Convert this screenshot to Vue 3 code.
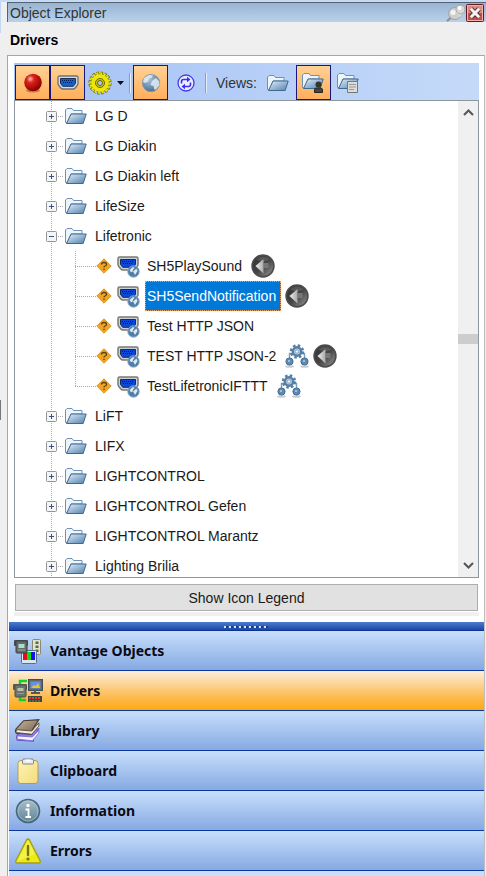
<script setup>
import { ref } from 'vue'

const groups = [
  { name: 'LG D' },
  { name: 'LG Diakin' },
  { name: 'LG Diakin left' },
  { name: 'LifeSize' },
  {
    name: 'Lifetronic',
    children: [
      { name: 'SH5PlaySound', marks: ['back'] },
      { name: 'SH5SendNotification', marks: ['back'] },
      { name: 'Test HTTP JSON', marks: [] },
      { name: 'TEST HTTP JSON-2', marks: ['task', 'back'] },
      { name: 'TestLifetronicIFTTT', marks: ['task'] }
    ]
  },
  { name: 'LiFT' },
  { name: 'LIFX' },
  { name: 'LIGHTCONTROL' },
  { name: 'LIGHTCONTROL Gefen' },
  { name: 'LIGHTCONTROL Marantz' },
  { name: 'Lighting Brilia' }
]
const selected = ref('SH5SendNotification')

const sections = [
  { name: 'Vantage Objects', icon: 'objects' },
  { name: 'Drivers', icon: 'drivers' },
  { name: 'Library', icon: 'library' },
  { name: 'Clipboard', icon: 'clipboard' },
  { name: 'Information', icon: 'info' },
  { name: 'Errors', icon: 'errors' }
]
const section = ref('Drivers')
</script>

<template>
  <svg class="defs" aria-hidden="true">
    <defs>
      <linearGradient id="gFolder" x1="0" y1="0" x2="1" y2="1">
        <stop offset="0" stop-color="#e4eff8" /><stop offset="1" stop-color="#4f80ae" />
      </linearGradient>
      <radialGradient id="gRed" cx=".35" cy=".3" r=".7">
        <stop offset="0" stop-color="#ffc0b8" /><stop offset=".3" stop-color="#dc2418" /><stop offset="1" stop-color="#8c0000" />
      </radialGradient>
      <radialGradient id="gGlobe" cx=".4" cy=".3" r=".7">
        <stop offset="0" stop-color="#a8c4da" /><stop offset="1" stop-color="#4a7296" />
      </radialGradient>
      <linearGradient id="gBack" x1="0" y1="0" x2="1" y2="1">
        <stop offset="0" stop-color="#303030" /><stop offset=".5" stop-color="#444" /><stop offset="1" stop-color="#9a9a9a" />
      </linearGradient>
      <linearGradient id="gArrow" x1="0" y1="0" x2="1" y2="0">
        <stop offset="0" stop-color="#f0f0f0" /><stop offset="1" stop-color="#a8a8a8" />
      </linearGradient>
      <linearGradient id="gInfo" x1="0" y1="0" x2="0" y2="1">
        <stop offset="0" stop-color="#a9bfcd" /><stop offset="1" stop-color="#5d8296" />
      </linearGradient>
      <linearGradient id="gClip" x1="0" y1="0" x2="1" y2="1">
        <stop offset="0" stop-color="#fff3b4" /><stop offset="1" stop-color="#f1dc7c" />
      </linearGradient>
      <linearGradient id="gBook" x1="0" y1="0" x2="1" y2="1">
        <stop offset="0" stop-color="#c9bba4" /><stop offset="1" stop-color="#6d5a44" />
      </linearGradient>
    </defs>
    <symbol id="folder" viewBox="0 0 22 18">
      <path d="M.5 15.500V3L2 1.500h5L8.500 3.500H17V7H6L3 16z" fill="#edf4fa" stroke="#6d92b4" />
      <path d="M1.500 16.500L6 7h15.200l-3 9.500z" fill="url(#gFolder)" stroke="#41688f" />
    </symbol>
    <symbol id="folderUser" viewBox="0 0 22 21">
      <use href="#folder" width="22" height="18" />
      <circle cx="16.500" cy="12.500" r="3" fill="#33332f" />
      <path d="M12.500 20.500v-2.500q0-2 2-2h4q2 0 2 2v2.500z" fill="#454540" stroke="#242420" />
    </symbol>
    <symbol id="folderDoc" viewBox="0 0 22 21">
      <use href="#folder" width="22" height="18" />
      <path d="M10.500 9.500h10v11h-10z" fill="#dcdcd8" stroke="#777" />
      <path d="M12 12.500h7M12 15h7M12 17.500h5" stroke="#999" />
    </symbol>
    <symbol id="record" viewBox="0 0 20 20">
      <ellipse cx="10" cy="17.500" rx="7" ry="2" fill="#a85c30" opacity=".6" />
      <circle cx="10" cy="9.500" r="8.800" fill="url(#gRed)" />
    </symbol>
    <symbol id="port" viewBox="0 0 22 15">
      <path d="M2.500 1h17q1.500 0 1.500 1.500v6q0 1-.8 2l-2 2.500q-.8 1-2.200 1H6q-1.400 0-2.200-1l-2-2.500q-.8-1-.8-2v-6Q1 1 2.500 1z" fill="#d8dbde" stroke="#6d7175" stroke-width="1.300" />
      <path d="M3.500 3.500h15v4.800l-2.200 3H5.700l-2.200-3z" fill="#1560c8" stroke="#183258" />
      <path d="M5 5.500h12M6 7.500h10" stroke="#0a1f58" stroke-dasharray="1 1" />
    </symbol>
    <symbol id="globe" viewBox="0 0 20 20">
      <circle cx="10" cy="10" r="8.700" fill="url(#gGlobe)" stroke="#7f97ac" stroke-width=".6" />
      <path d="M3 5l5-3 4 .5-1 2-3 1-1 3-3 1.500-2-1zM11 8l4-3 3 3 .5 4-3 4-2 1-1-4-3-1z" fill="#e4edf3" opacity=".85" />
    </symbol>
    <symbol id="gear" viewBox="0 0 24 24">
      <circle cx="12" cy="12" r="9.600" fill="none" stroke="#77750a" stroke-width="4" stroke-dasharray="2.500 1.270" />
      <circle cx="12" cy="12" r="9.200" fill="#eee60a" stroke="#85820a" stroke-width=".8" />
      <circle cx="12" cy="12" r="9.500" fill="none" stroke="#f0e80c" stroke-width="2.600" stroke-dasharray="1.700 2.030" />
      <circle cx="12" cy="12" r="4.500" fill="#d4cc18" stroke="#666408" />
      <circle cx="12" cy="12" r="2.500" fill="#b0c8f7" stroke="#666408" />
    </symbol>
    <symbol id="refresh" viewBox="0 0 18 18">
      <circle cx="9" cy="9" r="8" fill="#e9efff" stroke="#4538f0" stroke-width="1.300" />
      <path d="M4.500 9.500V7.500q0-2 2-2H11M13.500 8.500v2q0 2-2 2H7" fill="none" stroke="#3c2df0" stroke-width="1.600" />
      <path d="M10 2.800l3.500 2.700L10 8.200zM8 9.800l-3.500 2.700L8 15.200z" fill="#3c2df0" />
    </symbol>
    <symbol id="caution" viewBox="0 0 16 16">
      <path d="M8 .8L15.200 8 8 15.200.8 8z" fill="#f0a424" stroke="#dc9422" stroke-linejoin="round" />
      <path d="M5.500 6.500q0-2 2.500-2t2.500 1.800q0 1.200-1.500 1.700Q8 8.300 8 9.500" fill="none" stroke="#5c4212" stroke-width="1.300" />
      <path d="M7.300 10.700h1.400v1.400H7.300z" fill="#5c4212" />
    </symbol>
    <symbol id="netPort" viewBox="0 0 23 22">
      <path d="M2.500 1h17q1.500 0 1.500 1.500v6q0 1-.8 2l-2 2.500q-.8 1-2.200 1H6q-1.400 0-2.200-1l-2-2.500q-.8-1-.8-2v-6Q1 1 2.500 1z" fill="#cfd0d1" stroke="#77797b" stroke-width="1.500" />
      <path d="M3.500 3.500h15v4.800l-2.200 3H5.700l-2.200-3z" fill="#0a48dc" stroke="#1c2c44" />
      <path d="M5 5.500h12M6 7.500h10" stroke="#04145c" stroke-dasharray="1 1" />
      <circle cx="16.500" cy="15.500" r="5.700" fill="#4e7da8" stroke="#8aa9c4" />
      <path d="M12.500 14l3.500-3 1.500.7-1.500 2-.5 2-1.500.5zM16 15.500l3.500-3 1 2.500-2.500 4-1-2z" fill="#dfe9f1" />
    </symbol>
    <symbol id="back" viewBox="0 0 24 24">
      <circle cx="12" cy="12" r="10.900" fill="url(#gBack)" stroke="#4c4c4c" stroke-width="1.600" />
      <path d="M5 5.500Q12-.5 19 5.500L12 8z" fill="#777" opacity=".45" />
      <path d="M12.500 9h5v5h-5z" fill="#777" />
      <path d="M12.500 5v14.500L4.500 12z" fill="url(#gArrow)" />
    </symbol>
    <symbol id="task" viewBox="0 0 24 24">
      <ellipse cx="4.500" cy="22.500" rx="4.500" ry="1.300" fill="#c9cdd1" /><ellipse cx="19.500" cy="22.500" rx="4.500" ry="1.300" fill="#c9cdd1" />
      <path d="M8 9.500H4.500V15M16 9.500h3.500V15" fill="none" stroke="#7d9cb7" stroke-width="1.400" />
      <circle cx="12" cy="7.500" r="6" fill="none" stroke="#557fa5" stroke-width="2.400" stroke-dasharray="2.500 2.212" />
      <circle cx="12" cy="7.500" r="4.200" fill="#b4cbdd" stroke="#557fa5" stroke-width="2.400" />
      <circle cx="12" cy="7.500" r="1.700" fill="#eef4f9" stroke="#7d9cb7" stroke-width=".8" />
      <circle cx="4.500" cy="17.500" r="3.600" fill="#5f8ab0" stroke="#456f96" />
      <circle cx="19.500" cy="17.500" r="3.600" fill="#5f8ab0" stroke="#456f96" />
      <path d="M3 17h2M18 17h2" stroke="#b9cfe0" stroke-width="1.500" />
    </symbol>
    <symbol id="pin" viewBox="0 0 20 18">
      <path d="M1 17l6-5" stroke="#8c8c8c" stroke-width="2" />
      <ellipse cx="9" cy="9.500" rx="6.500" ry="6" fill="#cfcfcd" stroke="#a0a3a6" />
      <path d="M8 6l5-4 5 6-4 5z" fill="#dededc" />
      <circle cx="14.500" cy="5.500" r="4.500" fill="#d8d8d6" stroke="#a4a6a8" />
      <circle cx="13.500" cy="4" r="2" fill="#fff" /><circle cx="7" cy="8.500" r="2.500" fill="#f4f4f2" />
    </symbol>
    <symbol id="close" viewBox="0 0 18 18">
      <rect x=".5" y=".5" width="17" height="17" rx="1" fill="#dc8a84" stroke="#5c1c24" />
      <rect x="1.500" y="1.500" width="15" height="15" fill="none" stroke="#eeb0aa" />
      <path d="M2 9h14v7H2z" fill="#c0504c" />
      <path d="M5 5l8 8M13 5l-8 8" stroke="#5b3038" stroke-width="5" />
      <path d="M4.800 4.800l8.400 8.400M13.200 4.800l-8.400 8.400" stroke="#f6f2f2" stroke-width="3" />
    </symbol>
    <symbol id="objects" viewBox="0 0 30 26">
      <rect x="19.500" y="1.500" width="8" height="15" rx="1" fill="#e5e2cf" stroke="#8b8877" />
      <path d="M22.500 3.500h3v2.500h-3zM22.500 7.500h3v2.500h-3zM22.500 11.500h3v2.500h-3z" fill="#45763f" />
      <rect x="8.500" y="12.500" width="15" height="13" rx="1" fill="#dce6f0" stroke="#55708e" />
      <path d="M10 14h4v8h-4z" fill="#e80c18" /><path d="M14 14h4v8h-4z" fill="#10d81c" /><path d="M18 14h4v8h-4z" fill="#1414e8" />
      <rect x="1" y="2" width="14" height="6" rx="1" fill="#484d4e" /><rect x="3" y="3" width="11" height="12" rx="1" fill="#656c6c" stroke="#3b4040" />
      <rect x="5.500" y="6" width="6" height="4" fill="#a9dfc9" /><path d="M5 12h7" stroke="#a0a8a8" />
    </symbol>
    <symbol id="drivers" viewBox="0 0 30 26">
      <path d="M7 6V3h7M7 19v3h6" fill="none" stroke="#10d22c" stroke-width="2.500" />
      <rect x="15.500" y="1.500" width="14" height="11" fill="#606868" stroke="#454d4e" />
      <rect x="17.500" y="3.500" width="10" height="7" fill="#668fe8" /><path d="M18 10l3-3 2 1 2-3 2 5z" fill="#f0c51c" />
      <path d="M22 12v3M18 15h9" stroke="#52595b" stroke-width="2" />
      <rect x="0" y="6" width="14" height="6" rx="1" fill="#555a59" /><rect x="2" y="7" width="11" height="12" rx="1" fill="#6d7371" stroke="#4b504e" />
      <rect x="4.500" y="10" width="6" height="3" fill="#bac3a2" /><path d="M4 15.500h7" stroke="#929b93" />
      <rect x="15" y="18" width="14" height="6" fill="#3c4744" /><path d="M16 20h12" stroke="#f23434" stroke-width="2" stroke-dasharray="2 1" />
      <path d="M16 23h12" stroke="#39a164" stroke-dasharray="2 1" />
    </symbol>
    <symbol id="library" viewBox="0 0 26 24">
      <path d="M3 15.500l6-4 14-1.500-5 8v3.500L3 20.500q-1.500-2.500 0-5z" fill="#8d7ce2" stroke="#6858d0" />
      <path d="M3 16.500l14 1 6-6v2.500L17 21 3 19.500z" fill="#f2f2fc" stroke="#7969d8" stroke-width=".8" />
      <path d="M2 10L9 2.500l14-1-6 9.500-.5 4L2 14q-1.500-2 0-4z" fill="url(#gBook)" stroke="#49392a" />
      <path d="M2.500 10.800L16.500 12 23 4.500v3L16.500 15 2.500 13.500q-1-1.300 0-2.700z" fill="#f1eee6" stroke="#514131" stroke-width=".8" />
    </symbol>
    <symbol id="clipboard" viewBox="0 0 22 26">
      <rect x="1" y="2.500" width="20" height="23" rx="3" fill="url(#gClip)" stroke="#b09d50" />
      <path d="M5.500 5V2.500q0-1.500 1.500-1.500h8q1.500 0 1.500 1.500V5q0 1-1 1h-9q-1 0-1-1z" fill="#eaeaea" stroke="#828587" />
      <path d="M8.500 1.500h5v2h-5z" fill="#fff" />
    </symbol>
    <symbol id="info" viewBox="0 0 26 26">
      <circle cx="13" cy="13" r="11.500" fill="url(#gInfo)" stroke="#46697c" stroke-width="1.600" />
      <circle cx="13" cy="13" r="10" fill="none" stroke="#bed0da" stroke-width=".8" opacity=".6" />
      <circle cx="13" cy="7.500" r="1.700" fill="#fff" />
      <path d="M10.500 11.500h3V19M10.500 19h5.500" fill="none" stroke="#fff" stroke-width="1.800" />
    </symbol>
    <symbol id="errors" viewBox="0 0 26 26">
      <path d="M11.500 2q1.500-2 3 0l10.500 20.500q1 2.500-1.500 2.500h-21Q0 25 1 22.500z" fill="#eeea18" stroke="#a29e16" stroke-width="1.400" />
      <path d="M13 2.500l7 13.500L2.500 23z" fill="#f9f77b" opacity=".5" />
      <path d="M13 8v9" stroke="#77740c" stroke-width="2.400" stroke-linecap="round" /><circle cx="13" cy="21" r="1.600" fill="#77740c" />
    </symbol>
  </svg>

  <main class="explorer">
    <header class="titlebar">
      <h1 class="title">Object Explorer</h1>
      <button class="plain" type="button" aria-label="Auto hide"><svg width="20" height="18"><use href="#pin" /></svg></button>
      <button class="plain" type="button" aria-label="Close"><svg width="18" height="18"><use href="#close" /></svg></button>
    </header>
    <h2 class="heading">Drivers</h2>

    <section class="panel">
      <div class="content">
        <div class="toolbar" role="toolbar" aria-label="Driver filters">
          <button class="tool on" type="button" aria-label="Record" aria-pressed="true"><svg width="20" height="20"><use href="#record" /></svg></button>
          <button class="tool on" type="button" aria-label="Ports" aria-pressed="true"><svg width="22" height="15"><use href="#port" /></svg></button>
          <button class="tool menu" type="button" aria-label="Settings">
            <svg width="24" height="24"><use href="#gear" /></svg>
            <svg width="7" height="4" viewBox="0 0 7 4"><path d="M0 0h7L3.500 4z" fill="#111" /></svg>
          </button>
          <span class="sep"></span>
          <button class="tool on" type="button" aria-label="Network" aria-pressed="true"><svg width="20" height="20"><use href="#globe" /></svg></button>
          <button class="tool" type="button" aria-label="Refresh"><svg width="18" height="18"><use href="#refresh" /></svg></button>
          <span class="sep"></span>
          <span class="views">Views:</span>
          <button class="tool" type="button" aria-label="Folder view"><svg width="22" height="18"><use href="#folder" /></svg></button>
          <button class="tool on" type="button" aria-label="User view" aria-pressed="true"><svg width="22" height="21"><use href="#folderUser" /></svg></button>
          <button class="tool" type="button" aria-label="Document view"><svg width="22" height="21"><use href="#folderDoc" /></svg></button>
        </div>

        <div class="treebox">
          <ul class="tree" role="tree">
            <li v-for="g in groups" :key="g.name" class="group" role="treeitem">
              <div class="row">
                <button class="expander" type="button" :aria-label="(g.children ? 'Collapse ' : 'Expand ') + g.name">
                  <svg width="11" height="11" viewBox="0 0 11 11">
                    <rect x=".5" y=".5" width="10" height="10" rx="1" fill="#f5f5f5" stroke="#949494" />
                    <path :d="g.children ? 'M3 5.500h5' : 'M3 5.500h5M5.500 3v5'" stroke="#3b4f91" />
                  </svg>
                </button>
                <span class="stub"></span>
                <svg width="22" height="18"><use href="#folder" /></svg>
                <span class="name">{{ g.name }}</span>
              </div>
              <ul v-if="g.children" class="children" role="group">
                <li v-for="c in g.children" :key="c.name" class="row child" role="treeitem">
                  <span class="branch"></span>
                  <svg width="16" height="16"><use href="#caution" /></svg>
                  <svg class="driver" width="23" height="22"><use href="#netPort" /></svg>
                  <button class="label" :class="{ selected: selected === c.name }" type="button" @click="selected = c.name">{{ c.name }}</button>
                  <svg v-for="m in c.marks" :key="m" class="mark" width="24" height="24"><use :href="'#' + m" /></svg>
                </li>
              </ul>
            </li>
          </ul>
          <div class="scrollbar">
            <svg width="11" height="7" viewBox="0 0 11 7"><path d="M1 6l4.500-4.500L10 6" fill="none" stroke="#555" stroke-width="2" /></svg>
            <span class="thumb"></span>
            <svg width="11" height="7" viewBox="0 0 11 7"><path d="M1 1l4.500 4.500L10 1" fill="none" stroke="#555" stroke-width="2" /></svg>
          </div>
        </div>

        <button class="legend" type="button">Show Icon Legend</button>
        <div class="edge"></div>
      </div>

      <div class="splitter"></div>
      <nav class="sections" aria-label="Sections">
        <button v-for="s in sections" :key="s.name" class="section" :class="{ current: section === s.name }" type="button" @click="section = s.name">
          <svg width="30" height="26"><use :href="'#' + s.icon" /></svg>
          <span>{{ s.name }}</span>
        </button>
        <div class="rest"></div>
      </nav>
    </section>
  </main>
</template>

<style>
body { background: #efefef; }
#app { height: 100vh; }
</style>

<style scoped>
* { box-sizing: border-box; }
.defs { position: absolute; width: 0; height: 0; }
svg { display: block; flex: none; }
button { font: inherit; color: inherit; padding: 0; border: 0; background: none; }
ul { list-style: none; margin: 0; padding: 0; }

.explorer {
  height: 100%;
  display: flex;
  flex-direction: column;
  padding: 2px 0 0 7px;
  overflow: hidden;
  background: linear-gradient(#c3dbf8, #c3dbf8) 0 0 / 100% 2px no-repeat, linear-gradient(#c3d6f4, #c3d6f4) 0 0 / 1px 33px no-repeat, linear-gradient(#777, #777) 0 400px / 1px 20px no-repeat, #efefef;
  font: 14px/20px "Liberation Sans", Arial, sans-serif;
  color: #1a1a1a;
}
.titlebar {
  display: flex;
  align-items: center;
  height: 20px;
  padding: 0 2px;
  border-top: 1px solid #58626c;
  border-left: 1px solid #58626c;
  background: linear-gradient(#98b4d0, #b9d2ec);
  flex: none;
}
.title { flex: 1; margin: 0; font-size: 14px; line-height: 18px; font-weight: 400; color: #333; }
.heading { margin: 8px 0 5px 3px; font-size: 14px; line-height: 20px; font-weight: 700; color: #000; flex: none; }

.panel {
  flex: 1;
  min-height: 0;
  display: flex;
  flex-direction: column;
  margin-right: 1px;
  border: 1px solid #a6a6a6;
  border-right-color: #bdbdbd;
  border-bottom: 0;
  background: #fff;
}
.content { padding: 7px 5px 6px 6px; flex: none; }
.toolbar {
  display: flex;
  align-items: center;
  height: 37px;
  padding: 2px 0 0 1px;
  background: linear-gradient(90deg, #a5c2f5, #c5daf9);
}
.tool { display: flex; align-items: center; justify-content: center; width: 35px; height: 35px; }
.tool.on { border: 1px solid #17177c; background: linear-gradient(#ffd195, #ffaf5c); }
.tool.menu { width: 42px; gap: 5px; }
.sep { width: 1px; height: 20px; margin: 0 3px 0 2px; background: #7fa0d4; box-shadow: 1px 0 #e4eefc; }
.views { padding: 0 4px 0 7px; color: #333; }

.treebox { display: flex; height: 478px; border: 1px solid #8f969e; overflow: hidden; }
.tree { flex: 1; min-width: 0; }
.group { padding-left: 31px; background: repeating-linear-gradient(#aaa 0 1px, transparent 1px 2px) 36px 0 / 1px 100% no-repeat; }
.row { display: flex; align-items: center; height: 30px; white-space: nowrap; }
.expander { flex: none; }
.stub { width: 6px; height: 1px; margin: 0 1px 0 1px; background: repeating-linear-gradient(90deg, #aaa 0 1px, transparent 1px 2px); }
.name { margin-left: 8px; }
.children { padding-left: 29px; background: repeating-linear-gradient(#aaa 0 1px, transparent 1px 2px) 29px 0 / 1px 136px no-repeat; }
.branch { width: 21px; height: 1px; flex: none; background: repeating-linear-gradient(90deg, #aaa 0 1px, transparent 1px 2px); }
.driver { margin: 2px 5px 0 5px; }
.label { height: 30px; padding: 0 4px 0 1px; border: 1px dotted transparent; line-height: 28px; }
.label.selected { background: #0078d7; color: #fff; border-color: #f0a060; }
.mark { margin-left: 4px; }

.scrollbar { display: flex; flex-direction: column; align-items: center; justify-content: space-between; width: 20px; padding: 8px 0; background: #f0f0f0; }
.thumb { width: 100%; height: 10px; background: #cdcdcd; }

.legend { display: block; width: calc(100% - 2px); height: 27px; margin: 6px 0 0 1px; border: 1px solid #adadad; background: #e1e1e1; }
.edge { height: 4px; margin-top: 1px; background: #f0f0f0; }

.splitter {
  height: 9px;
  margin-left: 1px;
  flex: none;
  background: repeating-linear-gradient(90deg, #d8e4fa 0 2px, #173c8c 2px 4px, transparent 4px 5px) center 4px / 45px 2px no-repeat, linear-gradient(#4a7bd0, #1c48a4);
  border-bottom: 1px solid #0c3296;
}
.sections { display: flex; flex-direction: column; flex: 1; min-height: 0; margin-left: 1px; overflow: hidden; }
.section {
  display: flex;
  align-items: center;
  flex: none;
  height: 40px;
  gap: 7px;
  padding-left: 4px;
  border-bottom: 1px solid #0d379f;
  background: linear-gradient(#c8dffc, #86a9e2);
  font: 700 14px/20px "Noto Sans", Tahoma, sans-serif;
  color: #0a0a14;
}
.section.current { background: linear-gradient(#fdeedb, #fcc368 55%, #fda810); }
.rest { flex: 1; background: #c8dffc; }
</style>
